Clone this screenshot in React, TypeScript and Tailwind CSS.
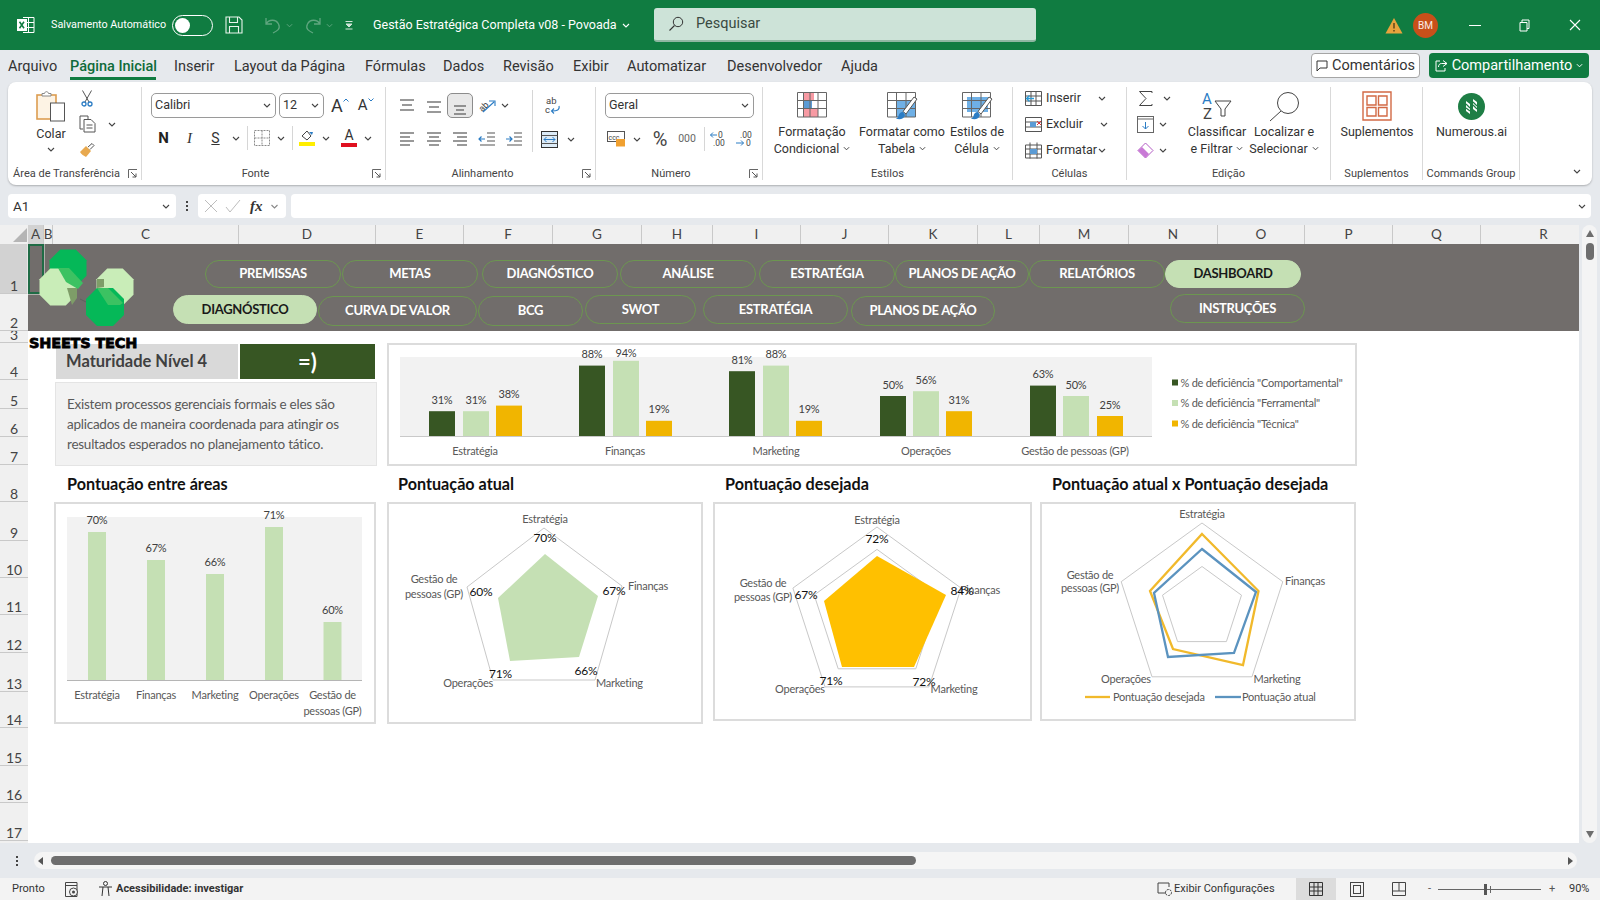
import React from "react";

const UI = "font-['Roboto',sans-serif]";
const CAL = "font-['Lato',sans-serif]";

function Chev({ c = "#444", w = 8 }: { c?: string; w?: number }) {
  return (
    <svg width={w} height={5} viewBox="0 0 8 5" className="shrink-0">
      <path d="M1 1l3 3 3-3" fill="none" stroke={c} strokeWidth="1.1" />
    </svg>
  );
}
function Launcher() {
  return (
    <svg width={10} height={10} viewBox="0 0 10 10">
      <path d="M0.5 9V0.5H9" fill="none" stroke="#666" />
      <path d="M3 3l5 5M8 4.5V8H4.5" fill="none" stroke="#555" />
    </svg>
  );
}
function Lines({ l, c = "#555" }: { l: number[][]; c?: string }) {
  return (
    <svg width={18} height={18} viewBox="0 0 18 18">
      {l.map((a, i) => (
        <path key={i} d={`M${a[0]} ${a[2]}H${a[1]}`} stroke={c} strokeWidth="1.2" />
      ))}
    </svg>
  );
}
function Indent({ right }: { right?: boolean }) {
  return (
    <svg width={18} height={18} viewBox="0 0 18 18">
      <path d="M9 3H17M9 7H17M9 11H17M2 15H17" stroke="#555" strokeWidth="1.2" />
      <path d={right ? "M1 9H7M4.5 6.5L7 9l-2.5 2.5" : "M1 9H7M3.5 6.5L1 9l2.5 2.5"} fill="none" stroke="#2b7cc4" strokeWidth="1.2" />
    </svg>
  );
}
function Grid({ children }: { children?: React.ReactNode }) {
  return (
    <svg width={32} height={32} viewBox="0 0 32 32">
      {children}
    </svg>
  );
}
function Brush() {
  return (
    <g>
      <path d="M31 9L20 24l-3-2.5L28 7z" fill="#fff" stroke="#555" strokeWidth="1" />
      <path d="M17 22c-3 0-4 2-4.5 4-.3 1.5-1.5 2-2.5 2.5 3 1.5 8 1 9-3.5z" fill="#2b7cc4" />
    </g>
  );
}
function TableLines() {
  return <path d="M1.5 2.5H29.5V27H1.5ZM1.5 10.5H29.5M1.5 18.5H29.5M10.5 2.5V27M20 2.5V27" fill="none" stroke="#666" strokeWidth="1" />;
}

function Label({ children, launcher }: { children: React.ReactNode; launcher?: boolean }) {
  return (
    <div className={`h-[12px] mt-[1px] flex items-center justify-center relative text-[11px] leading-[12px] text-[#444] whitespace-nowrap ${launcher ? "pr-[16px]" : ""}`}>
      {children}
      {launcher && (
        <span className="absolute right-[3px] top-[1px]">
          <Launcher />
        </span>
      )}
    </div>
  );
}
function Cell({ w, children, cls = "" }: { w: string; children?: React.ReactNode; cls?: string }) {
  return <div className={`${w} h-full flex items-center justify-center shrink-0 ${cls}`}>{children}</div>;
}
function Sep({ h = "h-[24px]" }: { h?: string }) {
  return <div className={`w-px ${h} bg-[#d6d6d6]`} />;
}
function Select({ w, text, ml = "" }: { w: string; text: string; ml?: string }) {
  return (
    <div className={`${w} ${ml} h-[25px] shrink-0 rounded-[5px] border border-[#9a9a9a] bg-white flex items-center justify-between pl-[3px] pr-[4px] text-[12.5px] text-[#333]`}>
      <span>{text}</span>
      <Chev />
    </div>
  );
}
function BigBtn({ w, icon, l1, l2 }: { w: string; icon: React.ReactNode; l1: string; l2?: string }) {
  return (
    <div className={`${w} shrink-0 flex flex-col items-center text-[12.5px] leading-[17px] text-[#333] whitespace-nowrap`}>
      <div className="h-[32px] mt-[3px] flex items-center justify-center">{icon}</div>
      <div className="mt-[1px] h-[17px]">{l1}</div>
      {l2 && (
        <div className="h-[17px] flex items-center gap-[4px]">
          {l2} <Chev w={7} />
        </div>
      )}
    </div>
  );
}

const tabs = [
  { t: "Arquivo", c: "w-[49px] mr-[13px] pt-[4px]" },
  { t: "Página Inicial", c: "w-[86px] mr-[18px] pt-[7px] font-medium text-[#0f6b3a] border-b-[3px] border-[#107c41]" },
  { t: "Inserir", c: "w-[42px] mr-[18px] pt-[4px]" },
  { t: "Layout da Página", c: "w-[111px] mr-[20px] pt-[4px]" },
  { t: "Fórmulas", c: "w-[60px] mr-[18px] pt-[4px]" },
  { t: "Dados", c: "w-[42px] mr-[18px] pt-[4px]" },
  { t: "Revisão", c: "w-[50px] mr-[20px] pt-[4px]" },
  { t: "Exibir", c: "w-[36px] mr-[18px] pt-[4px]" },
  { t: "Automatizar", c: "w-[81px] mr-[19px] pt-[4px]" },
  { t: "Desenvolvedor", c: "w-[97px] mr-[17px] pt-[4px]" },
  { t: "Ajuda", c: "w-[38px] pt-[4px]" },
];

const columns = [
  { t: "A", c: "w-[16px] bg-[#d2d2d2] text-[#1f6b45]" },
  { t: "B", c: "w-[9px]" },
  { t: "C", c: "w-[186px]" },
  { t: "D", c: "w-[137px]" },
  { t: "E", c: "w-[88px]" },
  { t: "F", c: "w-[89px]" },
  { t: "G", c: "w-[89px]" },
  { t: "H", c: "w-[71px]" },
  { t: "I", c: "w-[88px]" },
  { t: "J", c: "w-[88px]" },
  { t: "K", c: "w-[89px]" },
  { t: "L", c: "w-[62px]" },
  { t: "M", c: "w-[89px]" },
  { t: "N", c: "w-[89px]" },
  { t: "O", c: "w-[87px]" },
  { t: "P", c: "w-[88px]" },
  { t: "Q", c: "w-[88px]" },
  { t: "R", c: "w-[126px]" },
];

const rows = [
  { t: "1", c: "h-[50px] bg-[#d2d2d2] text-[#1f6b45]" },
  { t: "2", c: "h-[37px]" },
  { t: "3", c: "h-[12px]" },
  { t: "4", c: "h-[37px]" },
  { t: "5", c: "h-[29px]" },
  { t: "6", c: "h-[28px]" },
  { t: "7", c: "h-[28px]" },
  { t: "8", c: "h-[37px]" },
  { t: "9", c: "h-[39px]" },
  { t: "10", c: "h-[37px]" },
  { t: "11", c: "h-[37px]" },
  { t: "12", c: "h-[38px]" },
  { t: "13", c: "h-[39px]" },
  { t: "14", c: "h-[36px]" },
  { t: "15", c: "h-[38px]" },
  { t: "16", c: "h-[37px]" },
  { t: "17", c: "h-[38px]" },
];

const pillsTop = [
  { t: "PREMISSAS", c: "ml-[177px] w-[136px] h-[28px]" },
  { t: "METAS", c: "ml-[1px] w-[136px] h-[28px]" },
  { t: "DIAGNÓSTICO", c: "ml-[4px] w-[136px] h-[28px]" },
  { t: "ANÁLISE", c: "ml-[2px] w-[136px] h-[28px]" },
  { t: "ESTRATÉGIA", c: "ml-[3px] w-[136px] h-[28px]" },
  { t: "PLANOS DE AÇÃO", c: "w-[134px] h-[28px]" },
  { t: "RELATÓRIOS", c: "w-[136px] h-[28px]" },
  { t: "DASHBOARD", c: "w-[136px] h-[28px]", on: true },
];
const pillsBottom = [
  { t: "DIAGNÓSTICO", c: "ml-[145px] w-[144px] h-[29px] mt-[1px]", on: true },
  { t: "CURVA DE VALOR", c: "ml-[1px] w-[159px] h-[30px] mt-[2px]" },
  { t: "BCG", c: "ml-[1px] w-[105px] h-[30px] mt-[2px]" },
  { t: "SWOT", c: "ml-[2px] w-[111px] h-[29px] mt-[1px]" },
  { t: "ESTRATÉGIA", c: "ml-[7px] w-[145px] h-[29px] mt-[1px]" },
  { t: "PLANOS DE AÇÃO", c: "ml-[3px] w-[144px] h-[30px] mt-[2px]" },
  { t: "INSTRUÇÕES", c: "ml-[175px] w-[135px] h-[29px]" },
];

function Pill({ t, c, on }: { t: string; c: string; on?: boolean }) {
  return (
    <div
      className={`${c} shrink-0 rounded-full border-[1.5px] flex items-center justify-center text-[13px] font-bold tracking-[-0.3px] ${
        on ? "bg-[#c5e0b4] border-[#c5e0b4] text-[#1a1a1a]" : "border-[#6c9650] text-white"
      }`}
    >
      {t}
    </div>
  );
}

function T({ x, y, s = 11, c = "#595959", a = "middle", children }: { x: number; y: number; s?: number; c?: string; a?: "middle" | "start" | "end"; children: React.ReactNode }) {
  return (
    <text x={x} y={y - 1} fontSize={s} fill={c} textAnchor={a} dominantBaseline="central" letterSpacing="-0.25">
      {children}
    </text>
  );
}

function pent(cx: number, cy: number, r: number) {
  return [0, 1, 2, 3, 4]
    .map((i) => {
      const a = ((-90 + 72 * i) * Math.PI) / 180;
      return `${(cx + r * Math.cos(a)).toFixed(1)},${(cy + r * Math.sin(a)).toFixed(1)}`;
    })
    .join(" ");
}

const defGroups = [
  { n: "Estratégia", cx: 475, x: [429, 463, 496], v: [31, 31, 38] },
  { n: "Finanças", cx: 625, x: [579, 613, 646], v: [88, 94, 19] },
  { n: "Marketing", cx: 776, x: [729, 763, 796], v: [81, 88, 19] },
  { n: "Operações", cx: 926, x: [880, 913, 946], v: [50, 56, 31] },
  { n: "Gestão de pessoas (GP)", cx: 1075, x: [1030, 1063, 1097], v: [63, 50, 25] },
];
const defColors = ["#375623", "#c5e0b4", "#f1b500"];

function DefChart() {
  return (
    <svg className="w-full h-full" viewBox="389 345 966 119">
      <rect x="400" y="357" width="752" height="79" fill="#f2f2f2" />
      <path d="M400 436.5H1152" stroke="#c9c9c9" />
      {defGroups.map((g) => (
        <g key={g.n}>
          {g.v.map((v, i) => (
            <g key={i}>
              <rect x={g.x[i]} y={436 - v * 0.8} width={26} height={v * 0.8} fill={defColors[i]} />
              <T x={g.x[i] + 13} y={Math.max(353, 436 - v * 0.8 - 11)} c="#404040">
                {v}%
              </T>
            </g>
          ))}
          <T x={g.cx} y={451}>
            {g.n}
          </T>
        </g>
      ))}
      {['% de deficiência "Comportamental"', '% de deficiência "Ferramental"', '% de deficiência "Técnica"'].map((t, i) => (
        <g key={t}>
          <rect x={1172} y={379.5 + i * 20.5} width={6} height={6} fill={defColors[i]} />
          <T x={1180.5} y={383 + i * 20.5} a="start" s={11}>
            {t}
          </T>
        </g>
      ))}
    </svg>
  );
}

function AreaChart() {
  const d = [
    { n: "Estratégia", x: 97, top: 532, v: 70 },
    { n: "Finanças", x: 156, top: 560, v: 67 },
    { n: "Marketing", x: 215, top: 574, v: 66 },
    { n: "Operações", x: 274, top: 527, v: 71 },
    { n: "Gestão de", x: 332.5, top: 622, v: 60 },
  ];
  return (
    <svg className="w-full h-full" viewBox="56 504 318 218">
      <rect x="67" y="517" width="295" height="163" fill="#f2f2f2" />
      <path d="M67 680.5H362" stroke="#b5b5b5" />
      {d.map((b) => (
        <g key={b.n}>
          <rect x={b.x - 9} y={b.top} width={18} height={680 - b.top} fill="#c5e0b4" />
          <T x={b.x} y={b.top - 12} c="#404040">
            {b.v}%
          </T>
          <T x={b.x} y={695}>
            {b.n}
          </T>
        </g>
      ))}
      <T x={332.5} y={711}>
        pessoas (GP)
      </T>
    </svg>
  );
}

function RadarAtual() {
  return (
    <svg className="w-full h-full" viewBox="389 504 312 218">
      <polygon points="544,528 622,586 595,680 493,680 467,587" fill="none" stroke="#c8c8c8" />
      <polygon points="545,554 598,596 579,657 510,661 498,598" fill="#c5e0b4" />
      <T x={545} y={519}>Estratégia</T>
      <T x={545} y={538} s={12} c="#111">70%</T>
      <T x={628} y={586} a="start">Finanças</T>
      <T x={614} y={591} s={12} c="#111">67%</T>
      <T x={586} y={671} s={12} c="#111">66%</T>
      <T x={500.5} y={674} s={12} c="#111">71%</T>
      <T x={596} y={683} a="start">Marketing</T>
      <T x={493} y={683} a="end">Operações</T>
      <T x={434} y={579}>Gestão de</T>
      <T x={434} y={594}>pessoas (GP)</T>
      <T x={481} y={592} s={12} c="#111">60%</T>
    </svg>
  );
}

function RadarDesejada() {
  return (
    <svg className="w-full h-full" viewBox="715 504 315 215">
      <polygon points={pent(877, 615.4, 88.4)} fill="none" stroke="#c8c8c8" />
      <polygon points={pent(877, 615.4, 66)} fill="none" stroke="#c8c8c8" />
      <polygon points="877,556 946,595 914,667 842,667 824,601" fill="#ffc000" />
      <T x={877} y={520}>Estratégia</T>
      <T x={877} y={539} s={12} c="#111">72%</T>
      <T x={980} y={590}>Finanças</T>
      <T x={962} y={591} s={12} c="#111">84%</T>
      <T x={763} y={583}>Gestão de</T>
      <T x={763} y={597}>pessoas (GP)</T>
      <T x={806} y={595} s={12} c="#111">67%</T>
      <T x={831} y={681} s={12} c="#111">71%</T>
      <T x={924} y={682} s={12} c="#111">72%</T>
      <T x={954} y={689}>Marketing</T>
      <T x={800} y={689}>Operações</T>
    </svg>
  );
}

function RadarCompare() {
  return (
    <svg className="w-full h-full" viewBox="1042 504 312 215">
      <polygon points={pent(1202, 608, 85)} fill="none" stroke="#c8c8c8" />
      <polygon points={pent(1202, 608, 41.5)} fill="none" stroke="#c8c8c8" />
      <polygon points="1202,534 1258.5,591 1243,665 1173,649 1150,591" fill="none" stroke="#f1b92b" strokeWidth="2.3" />
      <polygon points="1202,549 1256,592 1234,653 1168,657 1154,593" fill="none" stroke="#5b93bf" strokeWidth="2.3" />
      <T x={1202} y={514}>Estratégia</T>
      <T x={1305} y={581}>Finanças</T>
      <T x={1277} y={679}>Marketing</T>
      <T x={1126} y={679}>Operações</T>
      <T x={1090} y={575}>Gestão de</T>
      <T x={1090} y={588}>pessoas (GP)</T>
      <path d="M1085 697H1110" stroke="#f1b92b" strokeWidth="2.3" />
      <T x={1113} y={697} a="start">Pontuação desejada</T>
      <path d="M1215 697H1241" stroke="#5b93bf" strokeWidth="2.3" />
      <T x={1242} y={697} a="start">Pontuação atual</T>
    </svg>
  );
}

const oct = (cx: number, cy: number, r: number) => {
  const k = r * 0.42;
  return `${cx - k},${cy - r} ${cx + k},${cy - r} ${cx + r},${cy - k} ${cx + r},${cy + k} ${cx + k},${cy + r} ${cx - k},${cy + r} ${cx - r},${cy + k} ${cx - r},${cy - k}`;
};

function Logo() {
  return (
    <svg width={100} height={80} viewBox="38 248 100 80">
      <path d="M80 299l18 9" stroke="#5f5f5f" />
      <polygon points={oct(115, 287, 18.5)} fill="#c9edb8" />
      <polygon points={oct(68, 268, 18.5)} fill="#05b858" />
      <polygon points={oct(58, 287, 18.5)} fill="#c9edb8" />
      <polygon points="58,268 69,268 83,283 78,289 66,282" fill="#3cc262" />
      <polygon points="67,288 77,288 77,298 72,305" fill="#7e9d68" />
      <polygon points={oct(105, 307, 19)} fill="#05b858" />
      <polygon points="97,288 108,288 123,303 120,305 108,305" fill="#3cc262" />
      <polygon points="97,279 104,279 104,287 97,288" fill="#7e9d68" />
    </svg>
  );
}

export default function App() {
  return (
    <div className={`w-[1600px] h-[900px] overflow-hidden bg-[#e6e9ed] flex flex-col ${UI}`}>
      {/* title bar */}
      <div className="h-[50px] bg-[#107c41] flex items-center text-white shrink-0">
        <div className="ml-[16px] w-[19px]">
          <svg width={19} height={20} viewBox="0 0 19 20">
            <path d="M7 2.5H18V17.5H7M7 7.5H18M7 12.5H18M12.5 2.5V17.5" fill="none" stroke="#fff" strokeWidth="1" />
            <rect x="1" y="4" width="10" height="12" fill="#fff" />
            <path d="M3.5 6.8l4.5 6.5M8 6.8l-4.5 6.5" stroke="#107c41" strokeWidth="1.5" />
          </svg>
        </div>
        <span className="ml-[16px] w-[114px] text-[10.8px] whitespace-nowrap">Salvamento Automático</span>
        <div className="ml-[7px] w-[41px] h-[21px] rounded-full border-[1.5px] border-white flex items-center px-[2px]">
          <div className="w-[15px] h-[15px] rounded-full bg-white" />
        </div>
        <svg className="ml-[12px]" width={18} height={18} viewBox="0 0 18 18">
          <path d="M1 1H14L17 4V17H1ZM4.5 1V6.5H12.5V1M4.5 17V10.5H13.5V17" fill="none" stroke="#e8f4ec" strokeWidth="1.1" />
        </svg>
        <svg className="ml-[21px]" width={18} height={18} viewBox="0 0 18 18">
          <path d="M2 2V8H8M2 8C5 3 12 3 14.5 8S13 15 9 17" fill="none" stroke="#5fa67f" strokeWidth="1.3" />
        </svg>
        <span className="ml-[4px]"><Chev c="#5fa67f" w={7} /></span>
        <svg className="ml-[11px]" width={18} height={18} viewBox="0 0 18 18">
          <path d="M16 2V8H10M16 8C13 3 6 3 3.5 8S5 15 9 17" fill="none" stroke="#5fa67f" strokeWidth="1.3" />
        </svg>
        <span className="ml-[4px]"><Chev c="#5fa67f" w={7} /></span>
        <svg className="ml-[11px]" width={10} height={10} viewBox="0 0 10 10">
          <path d="M1.5 1.5H8.5M2 4l3 3 3-3ZM1.5 9H8.5" fill="#cfe5d8" stroke="#cfe5d8" strokeWidth="1" />
        </svg>
        <span className="ml-[19px] w-[243px] text-[12.5px] whitespace-nowrap">Gestão Estratégica Completa v08 - Povoada</span>
        <span className="ml-[5px]"><Chev c="#fff" w={10} /></span>
        <div className="ml-[23px] w-[382px] h-[34px] rounded-[3px] bg-[#cde3d8] border-b-2 border-[#8fb7a2] flex items-center text-[#3a4a42] text-[14.5px]">
          <svg className="ml-[14px]" width={16} height={16} viewBox="0 0 16 16">
            <circle cx="10" cy="6" r="4.7" fill="none" stroke="#333" strokeWidth="1" />
            <path d="M6.5 9.5L1.5 14.5" stroke="#333" strokeWidth="1.1" />
          </svg>
          <span className="ml-[12px]">Pesquisar</span>
        </div>
        <svg className="ml-[349px]" width={18} height={17} viewBox="0 0 18 17">
          <path d="M9 1L17.5 16.5H.5Z" fill="#e8a33d" />
          <path d="M9 6V11.5M9 13V14.5" stroke="#3d3010" strokeWidth="1.2" />
        </svg>
        <div className="ml-[10px] w-[25px] h-[25px] rounded-full bg-[#c8501a] flex items-center justify-center text-[10px] text-white/90">BM</div>
        <div className="ml-[31px] w-[12px] h-px bg-white" />
        <svg className="ml-[38px]" width={11} height={13} viewBox="0 0 11 13">
          <path d="M1 3.5H8V12H1ZM3 3.5V1H10V9.5H8" fill="none" stroke="#fff" strokeWidth="1" />
        </svg>
        <svg className="ml-[39px]" width={12} height={12} viewBox="0 0 12 12">
          <path d="M1 1L11 11M11 1L1 11" stroke="#fff" strokeWidth="1.1" />
        </svg>
      </div>

      {/* tabs */}
      <div className="h-[32px] flex shrink-0 pl-[8px] text-[14.5px] text-[#333] relative whitespace-nowrap">
        {tabs.map((t) => (
          <div key={t.t} className={`${t.c} h-[30px] flex items-center shrink-0`}>
            {t.t}
          </div>
        ))}
        <div className="ml-[432px] mt-[3px] w-[109px] h-[25px] rounded-[4px] bg-white border border-[#a5a5a5] flex items-center justify-center gap-[4px] shrink-0">
          <svg width={12} height={12} viewBox="0 0 12 12">
            <path d="M1 1H11V8H4L1 11Z" fill="none" stroke="#333" />
          </svg>
          Comentários
        </div>
        <div className="ml-[9px] mt-[3px] w-[160px] h-[25px] rounded-[4px] bg-[#107c41] text-white flex items-center justify-center gap-[4px] shrink-0">
          <svg width={13} height={13} viewBox="0 0 13 13">
            <path d="M8 1.5L12 4.5L8 7.5M12 4.5H6.5C4.5 4.5 3.5 6 3.5 8M5 2H1V12H10V9" fill="none" stroke="#fff" />
          </svg>
          Compartilhamento
          <Chev c="#fff" w={7} />
        </div>
      </div>

      {/* ribbon */}
      <div className="h-[103px] shrink-0 mx-[8px] rounded-[8px] bg-white shadow-[0_1px_2px_rgba(0,0,0,0.25)] flex text-[#333]">
        {/* clipboard */}
        <div className="w-[134px] my-[5px] h-[93px] border-r border-[#d9d9d9] flex flex-col shrink-0">
          <div className="h-[81px] flex">
            <div className="ml-[16px] w-[54px] flex flex-col items-center">
              <svg className="mt-[3px]" width={30} height={32} viewBox="0 0 30 32">
                <rect x="1" y="5" width="19" height="24" fill="#fdf3e4" stroke="#dd9d50" strokeWidth="1.6" />
                <path d="M6 6V3.5H8.5C9 1 12 1 12.5 3.5H15V6Z" fill="#fff" stroke="#888" />
                <rect x="14.5" y="13" width="14" height="18" fill="#fff" stroke="#555" />
              </svg>
              <span className="text-[12.5px] leading-[17px] mt-[3px]">Colar</span>
              <span className="mt-[5px]"><Chev /></span>
            </div>
            <div className="w-[18px] flex flex-col items-center">
              <svg className="mt-[3px]" width={14} height={17} viewBox="0 0 14 17">
                <path d="M2.5 0.5L9 12M11.5 0.5L5 12" stroke="#555" strokeWidth="1" fill="none" />
                <circle cx="4" cy="14" r="2" fill="none" stroke="#2b7cc4" strokeWidth="1.3" />
                <circle cx="10" cy="14" r="2" fill="none" stroke="#2b7cc4" strokeWidth="1.3" />
              </svg>
              <svg className="mt-[8px]" width={17} height={18} viewBox="0 0 17 18">
                <path d="M4 14H1V1H9V4M5 4.5H12L16 8.5V17H5ZM7.5 10H13.5M7.5 13H13.5" fill="none" stroke="#555" />
              </svg>
              <svg className="mt-[9px]" width={17} height={16} viewBox="0 0 17 16">
                <path d="M1 10L7 4L12 9L7 15C5 14 2 12 1 10Z" fill="#e8a94f" />
                <path d="M9 5L13 1.5L15 3.5L11 7.5" fill="none" stroke="#555" />
              </svg>
            </div>
            <div className="ml-[12px] mt-[35px]"><Chev /></div>
          </div>
          <Label launcher>Área de Transferência</Label>
        </div>
        {/* font */}
        <div className="w-[244px] my-[5px] h-[93px] border-r border-[#d9d9d9] flex flex-col shrink-0">
          <div className="h-[81px] flex flex-col pl-[9px]">
            <div className="flex items-center mt-[6px]">
              <Select w="w-[125px]" text="Calibri" />
              <Select w="w-[45px]" text="12" ml="ml-[3px]" />
              <div className="ml-[7px] flex items-start h-[25px]">
                <span className="text-[18px] leading-[25px] text-[#333]">A</span>
                <svg className="mt-[5px]" width={6} height={4} viewBox="0 0 6 4"><path d="M.5 3.5L3 1L5.500 3.500" fill="none" stroke="#2b7cc4" /></svg>
              </div>
              <div className="ml-[9px] flex items-start h-[25px]">
                <span className="text-[15px] leading-[25px] text-[#333]">A</span>
                <svg className="mt-[5px]" width={6} height={4} viewBox="0 0 6 4"><path d="M.5 .5L3 3L5.500 .5" fill="none" stroke="#2b7cc4" /></svg>
              </div>
            </div>
            <div className="flex h-[26px] mt-[7px]">
              <Cell w="w-[25px]"><span className="text-[15px] font-bold text-[#222]">N</span></Cell>
              <Cell w="w-[27px]"><span className="font-['Liberation_Serif',serif] italic text-[15px]">I</span></Cell>
              <Cell w="w-[25px]"><span className="text-[14px] underline">S</span></Cell>
              <Cell w="w-[16px]"><Chev /></Cell>
              <Cell w="w-[6px]"><Sep /></Cell>
              <Cell w="w-[24px]">
                <svg width={16} height={16} viewBox="0 0 16 16">
                  <path d="M.5.5H15.5V15.5H.5ZM8 .5V15.5M.5 8H15.5" fill="none" stroke="#8a8a8a" strokeDasharray="2 1" />
                </svg>
              </Cell>
              <Cell w="w-[14px]"><Chev /></Cell>
              <Cell w="w-[8px]"><Sep /></Cell>
              <Cell w="w-[22px]">
                <div className="flex flex-col items-center">
                  <svg width={14} height={11} viewBox="0 0 14 11">
                    <path d="M2 6L7 1L11 6L7 10Z" fill="none" stroke="#444" />
                    <path d="M9 2L12 5L13 2Z" fill="#2b7cc4" />
                  </svg>
                  <div className="w-[16px] h-[4px] bg-[#ffee00] mt-[1px]" />
                </div>
              </Cell>
              <Cell w="w-[16px]"><Chev /></Cell>
              <Cell w="w-[30px]">
                <div className="flex flex-col items-center">
                  <span className="text-[14px] leading-[13px]">A</span>
                  <div className="w-[16px] h-[4px] bg-[#e01020] mt-[1px]" />
                </div>
              </Cell>
              <Cell w="w-[8px]"><Chev /></Cell>
            </div>
          </div>
          <Label launcher>Fonte</Label>
        </div>
        {/* alignment */}
        <div className="w-[210px] my-[5px] h-[93px] border-r border-[#d9d9d9] flex flex-col shrink-0">
          <div className="h-[81px] flex pl-[8px]">
            <div className="w-[138px] flex flex-col">
              <div className="flex h-[25px] mt-[6px]">
                <Cell w="w-[26px]"><Lines l={[[2, 16, 3], [4, 14, 8], [2, 16, 13]]} /></Cell>
                <Cell w="w-[27px]"><Lines l={[[2, 16, 5], [4, 14, 10], [2, 16, 15]]} /></Cell>
                <Cell w="w-[26px]" cls="rounded-[5px] border border-[#8c8c8c] bg-[#e8e8e8]"><Lines l={[[3, 15, 9], [5, 13, 13], [3, 15, 17]]} /></Cell>
                <Cell w="w-[27px]">
                  <svg width={20} height={20} viewBox="0 0 20 20">
                    <text x="1" y="14" fontSize="9" fill="#444" transform="rotate(-45 6 10)">ab</text>
                    <path d="M6 16L17 6M12 5H18V10" fill="none" stroke="#2b7cc4" strokeWidth="1.1" />
                  </svg>
                </Cell>
                <Cell w="w-[10px]"><Chev /></Cell>
              </div>
              <div className="flex h-[26px] mt-[8px]">
                <Cell w="w-[26px]"><Lines l={[[2, 16, 3], [2, 12, 7], [2, 16, 11], [2, 12, 15]]} /></Cell>
                <Cell w="w-[27px]"><Lines l={[[2, 16, 3], [4, 14, 7], [2, 16, 11], [4, 14, 15]]} /></Cell>
                <Cell w="w-[26px]"><Lines l={[[2, 16, 3], [6, 16, 7], [2, 16, 11], [6, 16, 15]]} /></Cell>
                <Cell w="w-[27px]"><Indent /></Cell>
                <Cell w="w-[27px]"><Indent right /></Cell>
              </div>
            </div>
            <div className="mt-[3px]"><Sep h="h-[62px]" /></div>
            <div className="ml-[8px] flex flex-col">
              <div className="w-[24px] h-[25px] mt-[6px] flex items-center justify-center">
                <svg width={18} height={20} viewBox="0 0 18 20">
                  <text x="2" y="8" fontSize="9.5" fill="#444">ab</text>
                  <text x="1" y="17" fontSize="9.5" fill="#444">c</text>
                  <path d="M15 10C16 14 13 15 8 15M10 12.5L7.5 15L10 17.5" fill="none" stroke="#2b7cc4" strokeWidth="1.1" />
                </svg>
              </div>
              <div className="flex h-[26px] mt-[8px] items-center">
                <svg width={17} height={17} viewBox="0 0 17 17">
                  <rect x=".5" y=".5" width="16" height="16" fill="#dcebf7" stroke="#333" />
                  <path d="M.5 4.5H16.5M.5 12.5H16.5" stroke="#555" />
                  <path d="M3 8.5H14M5.5 6L3 8.5L5.5 11M11.5 6L14 8.5L11.5 11" fill="none" stroke="#2b7cc4" />
                </svg>
                <span className="ml-[9px]"><Chev /></span>
              </div>
            </div>
          </div>
          <Label launcher>Alinhamento</Label>
        </div>
        {/* number */}
        <div className="w-[167px] my-[5px] h-[93px] border-r border-[#d9d9d9] flex flex-col shrink-0">
          <div className="h-[81px] flex flex-col pl-[9px]">
            <div className="mt-[6px]"><Select w="w-[149px]" text="Geral" /></div>
            <div className="flex h-[26px] mt-[8px]">
              <Cell w="w-[22px]">
                <svg width={19} height={16} viewBox="0 0 19 16">
                  <rect x=".5" y=".5" width="17" height="10" fill="#fff" stroke="#555" />
                  <text x="1.5" y="8.5" fontSize="7" fill="#444">ccc</text>
                  <path d="M9 8H18V15.5H9Z" fill="#f0a030" />
                </svg>
              </Cell>
              <Cell w="w-[20px]"><Chev /></Cell>
              <Cell w="w-[26px]"><span className="text-[20px] text-[#444] leading-none">%</span></Cell>
              <Cell w="w-[28px]"><span className="text-[10.5px] text-[#666]">000</span></Cell>
              <Cell w="w-[6px]"><Sep /></Cell>
              <Cell w="w-[22px]">
                <svg width={18} height={18} viewBox="0 0 18 18">
                  <text x="9" y="8" fontSize="8.5" fill="#444">0</text>
                  <text x="4" y="16" fontSize="8.5" fill="#444">.00</text>
                  <path d="M8 5H1.5M4 2.5L1.5 5L4 7.5" fill="none" stroke="#2b7cc4" />
                </svg>
              </Cell>
              <Cell w="w-[30px]">
                <svg width={18} height={18} viewBox="0 0 18 18">
                  <text x="5" y="8" fontSize="8.5" fill="#444">.00</text>
                  <text x="11" y="16" fontSize="8.5" fill="#444">0</text>
                  <path d="M1 13H8.5M6 10.5L8.5 13L6 15.5" fill="none" stroke="#2b7cc4" />
                </svg>
              </Cell>
            </div>
          </div>
          <Label launcher>Número</Label>
        </div>
        {/* styles */}
        <div className="w-[250px] my-[5px] h-[93px] border-r border-[#d9d9d9] flex flex-col shrink-0">
          <div className="h-[81px] flex pl-[4px]">
            <BigBtn
              w="w-[90px]"
              l1="Formatação"
              l2="Condicional"
              icon={
                <Grid>
                  <rect x="7" y="2.5" width="11" height="8" fill="#f79aa3" />
                  <rect x="7" y="10.5" width="9" height="8" fill="#5b9bd5" />
                  <rect x="7" y="18.5" width="15" height="8.5" fill="#f79aa3" />
                  <path d="M1.5 2.5H30.5V27H1.5ZM1.5 10.5H30.5M1.5 18.5H30.5M7.5 2.5V27M14 2.5V27M22 2.5V27" fill="none" stroke="#666" />
                </Grid>
              }
            />
            <BigBtn
              w="w-[90px]"
              l1="Formatar como"
              l2="Tabela"
              icon={
                <Grid>
                  <rect x="11" y="11" width="18" height="16" fill="#6fb0e6" />
                  <TableLines />
                  <Brush />
                </Grid>
              }
            />
            <BigBtn
              w="w-[60px]"
              l1="Estilos de"
              l2="Célula"
              icon={
                <Grid>
                  <rect x="6" y="7" width="21" height="15" fill="#6fb0e6" />
                  <TableLines />
                  <Brush />
                </Grid>
              }
            />
          </div>
          <Label>Estilos</Label>
        </div>
        {/* cells */}
        <div className="w-[114px] my-[5px] h-[93px] border-r border-[#d9d9d9] flex flex-col shrink-0">
          <div className="h-[81px] flex flex-col pl-[12px] text-[12.5px]">
            <div className="h-[26px] mt-[-2px] flex items-center gap-[4px]">
              <svg width={17} height={15} viewBox="0 0 17 15">
                <path d="M.5.5H16.5V14.5H.5ZM6 .5V14.5M11 .5V14.5M.5 5H16.5M.5 10H16.5" fill="none" stroke="#555" />
                <path d="M9 7.5H1.5M4.5 4.5L1.5 7.5L4.5 10.5" fill="none" stroke="#2b9ad6" strokeWidth="1.3" />
              </svg>
              <span className="w-[48px]">Inserir</span>
              <Chev />
            </div>
            <div className="h-[26px] flex items-center gap-[4px]">
              <svg width={17} height={15} viewBox="0 0 17 15">
                <path d="M.5.5H16.5V14.5H.5ZM.5 5H16.5M.5 10H16.5" fill="none" stroke="#555" />
                <rect x="5" y="5" width="6" height="5" fill="#5b9bd5" />
                <path d="M12 4l4 4M16 4l-4 4" stroke="#d9363e" />
              </svg>
              <span className="w-[50px]">Excluir</span>
              <Chev />
            </div>
            <div className="h-[26px] flex items-center gap-[4px]">
              <svg width={17} height={17} viewBox="0 0 17 17">
                <path d="M.5 3H16.5V16H.5ZM5 .5V16.5M12 .5V16.5M.5 7H16.5M.5 12H16.5" fill="none" stroke="#555" />
                <rect x="5" y="7" width="7" height="5" fill="#5b9bd5" />
              </svg>
              <span className="w-[48px]">Formatar</span>
              <Chev />
            </div>
          </div>
          <Label>Células</Label>
        </div>
        {/* editing */}
        <div className="w-[204px] my-[5px] h-[93px] border-r border-[#d9d9d9] flex flex-col shrink-0">
          <div className="h-[81px] flex pl-[10px]">
            <div className="w-[46px] flex flex-col">
              <div className="h-[26px] mt-[-2px] flex items-center">
                <svg width={17} height={17} viewBox="0 0 17 17">
                  <path d="M15 3V1.5H2.5L9 8.5L2.5 15.5H15V14" fill="none" stroke="#444" />
                </svg>
                <span className="ml-[9px]"><Chev /></span>
              </div>
              <div className="h-[26px] flex items-center">
                <svg width={17} height={17} viewBox="0 0 17 17">
                  <rect x=".5" y=".5" width="16" height="16" fill="#fff" stroke="#666" />
                  <path d="M.5 3H16.5" stroke="#666" />
                  <path d="M8.5 6V13M5.5 10L8.5 13L11.5 10" fill="none" stroke="#2b7cc4" />
                </svg>
                <span className="ml-[5px]"><Chev /></span>
              </div>
              <div className="h-[26px] flex items-center">
                <svg width={17} height={17} viewBox="0 0 17 17">
                  <path d="M8.5 1L16 8.5L8.5 16L1 8.5Z" fill="#fff" stroke="#b35cc4" />
                  <path d="M5 5L12 12L8.5 16L1 8.5Z" fill="#c97ad6" />
                </svg>
                <span className="ml-[5px]"><Chev /></span>
              </div>
            </div>
            <BigBtn
              w="w-[68px]"
              l1="Classificar"
              l2="e Filtrar"
              icon={
                <svg className="overflow-visible" width={30} height={30} viewBox="0 0 30 30">
                  <text x="0" y="13" fontSize="15" fill="#2b7cc4">A</text>
                  <text x="1" y="28" fontSize="15" fill="#444">Z</text>
                  <path d="M13 10H29L23 18V25H19V18Z" fill="none" stroke="#444" />
                </svg>
              }
            />
            <BigBtn
              w="w-[66px]"
              l1="Localizar e"
              l2="Selecionar"
              icon={
                <svg width={31} height={31} viewBox="0 0 31 31">
                  <circle cx="19" cy="12" r="10.5" fill="none" stroke="#444" />
                  <path d="M12 20L1 30" stroke="#444" />
                </svg>
              }
            />
          </div>
          <Label>Edição</Label>
        </div>
        {/* add-ins */}
        <div className="w-[92px] my-[5px] h-[93px] border-r border-[#d9d9d9] flex flex-col shrink-0">
          <div className="h-[81px]">
            <BigBtn
              w="w-[92px]"
              l1="Suplementos"
              icon={
                <svg width={30} height={30} viewBox="0 0 30 30">
                  <path d="M1 1H29V29H1ZM5 5H14V14H5ZM16.5 5H25V14H16.5ZM5 16.5H14V25H5ZM16.5 16.5H25V25H16.5Z" fill="#fff" stroke="#d26a45" strokeWidth="1.4" />
                </svg>
              }
            />
          </div>
          <Label>Suplementos</Label>
        </div>
        <div className="w-[97px] my-[5px] h-[93px] border-r border-[#d9d9d9] flex flex-col shrink-0">
          <div className="h-[81px]">
            <BigBtn
              w="w-[97px]"
              l1="Numerous.ai"
              icon={
                <svg width={27} height={27} viewBox="0 0 27 27">
                  <circle cx="13.5" cy="13.5" r="13.5" fill="#1e7e45" />
                  <path d="M8 8V18L12 21V11ZM15 6L19 9V19L15 16Z" fill="#fff" />
                  <path d="M8 11L12 15M15 9L19 13M8 15L12 18M15 12L19 16" stroke="#1e7e45" strokeWidth="1.2" />
                </svg>
              }
            />
          </div>
          <Label>Commands Group</Label>
        </div>
        <div className="ml-[52px] mt-[87px]"><Chev w={10} /></div>
      </div>

      {/* formula bar */}
      <div className="h-[24px] mt-[9px] shrink-0 flex pl-[8px]">
        <div className="w-[168px] rounded-[4px] bg-white flex items-center justify-between pl-[5px] pr-[5px] text-[13.5px] text-[#333]">
          A1
          <Chev w={10} />
        </div>
        <div className="w-[22px] flex flex-col items-center justify-center gap-[2px]">
          <div className="w-[2px] h-[2px] bg-[#444]" />
          <div className="w-[2px] h-[2px] bg-[#444]" />
          <div className="w-[2px] h-[2px] bg-[#444]" />
        </div>
        <div className="w-[88px] rounded-[4px] bg-white flex items-center pl-[6px] gap-[7px]">
          <svg width={14} height={14} viewBox="0 0 14 14"><path d="M1 1L13 13M13 1L1 13" stroke="#bdbdbd" /></svg>
          <svg width={16} height={14} viewBox="0 0 16 14"><path d="M1 8L5 13L15 1" fill="none" stroke="#bdbdbd" /></svg>
          <span className="font-['Liberation_Serif',serif] italic font-bold text-[15px] text-[#333] ml-[2px]">fx</span>
          <Chev c="#888" w={9} />
        </div>
        <div className="ml-[5px] w-[1300px] rounded-[4px] bg-white flex items-center justify-end pr-[4px]">
          <Chev w={10} />
        </div>
      </div>

      {/* sheet + vertical scrollbar */}
      <div className="h-[618px] mt-[7px] shrink-0 flex">
        <div className={`w-[1579px] shrink-0 flex flex-col ${CAL}`}>
          {/* column headers */}
          <div className="h-[19px] shrink-0 flex bg-[#f0f0f0] overflow-hidden">
            <div className="w-[28px] flex items-end justify-end pr-[1px] pb-[2px] shrink-0">
              <div className="w-0 h-0 border-l-[14px] border-l-transparent border-b-[14px] border-b-[#b5b5b5]" />
            </div>
            {columns.map((c) => (
              <div key={c.t} className={`${c.c} shrink-0 flex items-center justify-center border-r border-[#c9c9c9] text-[13.5px] leading-none text-[#444]`}>
                {c.t}
              </div>
            ))}
          </div>

          {/* sheet */}
          <div className="h-[599px] shrink-0 flex overflow-hidden bg-white">
            <div className="w-[28px] shrink-0 flex flex-col bg-[#f0f0f0]">
              {rows.map((r) => (
                <div key={r.t} className={`${r.c} shrink-0 overflow-hidden flex items-end justify-center border-b border-[#c9c9c9] text-[14px] leading-[15px] text-[#444]`}>
                  {r.t}
                </div>
              ))}
            </div>

            <div className="w-[1551px] shrink-0 relative flex flex-col">
              <div className="absolute left-0 top-0 w-[16px] h-[50px] border-2 border-[#1f6b45] shadow-[0_0_0_1px_rgba(255,255,255,0.45)] z-10" />
              <div className="absolute left-[10px] top-[4px] z-10">
                <Logo />
              </div>
              <div className="absolute left-[1px] top-[91px] z-10 font-['DejaVu_Sans',sans-serif] font-bold text-[14.5px] leading-[16px] tracking-[-0.2px] text-black [-webkit-text-stroke:0.8px_black] whitespace-nowrap">
                SHEETS TECH
              </div>

              {/* nav band */}
              <div className="h-[87px] shrink-0 bg-[#716d6b]">
                <div className="flex pt-[16px] h-[50px]">
                  {pillsTop.map((p) => (
                    <Pill key={p.t} {...p} />
                  ))}
                </div>
                <div className="flex">
                  {pillsBottom.map((p) => (
                    <Pill key={p.t} {...p} />
                  ))}
                </div>
              </div>

              {/* dashboard upper row */}
              <div className="flex mt-[12px] pl-[27px] shrink-0 h-[123px]">
                <div className="w-[322px] flex flex-col shrink-0">
                  <div className="flex h-[35px] mt-[1px]">
                    <div className="w-[182px] ml-[1px] bg-[#d9d9d9] flex items-center pl-[10px] text-[16.5px] font-bold text-[#404040]">Maturidade Nível 4</div>
                    <div className="w-[135px] ml-[2px] bg-[#375623] flex items-center justify-center text-[22px] font-bold text-white">=)</div>
                  </div>
                  <div className="h-[84px] mt-[3px] bg-[#f2f2f2] border border-[#e4e4e4] pl-[11px] pt-[11px] text-[13.5px] leading-[20px] tracking-[-0.25px] text-[#595959]">
                    Existem processos gerenciais formais e eles são
                    <br />
                    aplicados de maneira coordenada para atingir os
                    <br />
                    resultados esperados no planejamento tático.
                  </div>
                </div>
                <div className="w-[970px] ml-[10px] border-2 border-[#dcdcdc] shrink-0">
                  <DefChart />
                </div>
              </div>

              {/* dashboard lower row */}
              <div className="flex pl-[26px] shrink-0">
                <div className="w-[322px] shrink-0">
                  <div className="h-[36px] pt-[6px] pl-[13px] text-[16.2px] leading-[24px] font-bold text-[#111]">Pontuação entre áreas</div>
                  <div className="h-[222px] border-2 border-[#dcdcdc]"><AreaChart /></div>
                </div>
                <div className="w-[316px] ml-[11px] shrink-0">
                  <div className="h-[36px] pt-[6px] pl-[11px] text-[16.2px] leading-[24px] font-bold text-[#111]">Pontuação atual</div>
                  <div className="h-[222px] border-2 border-[#dcdcdc]"><RadarAtual /></div>
                </div>
                <div className="w-[319px] ml-[10px] shrink-0">
                  <div className="h-[36px] pt-[6px] pl-[12px] text-[16.2px] leading-[24px] font-bold text-[#111]">Pontuação desejada</div>
                  <div className="h-[219px] border-2 border-[#dcdcdc]"><RadarDesejada /></div>
                </div>
                <div className="w-[316px] ml-[8px] shrink-0">
                  <div className="h-[36px] pt-[6px] pl-[12px] text-[16.2px] leading-[24px] font-bold text-[#111] whitespace-nowrap">Pontuação atual x Pontuação desejada</div>
                  <div className="h-[219px] border-2 border-[#dcdcdc]"><RadarCompare /></div>
                </div>
              </div>
            </div>
          </div>
        </div>

        {/* vertical scrollbar */}
        <div className="w-[21px] shrink-0 flex justify-center">
          <div className="w-[15px] h-[618px] rounded-full bg-[#f4f4f4] flex flex-col items-center justify-between pt-[5px] pb-[5px]">
            <div className="flex flex-col items-center">
              <div className="w-0 h-0 border-x-[4px] border-x-transparent border-b-[7px] border-b-[#6e6e6e]" />
              <div className="w-[8px] h-[17px] mt-[6px] rounded-[4px] bg-[#6e6e6e]" />
            </div>
            <div className="w-0 h-0 border-x-[4px] border-x-transparent border-t-[7px] border-t-[#6e6e6e]" />
          </div>
        </div>
      </div>

      {/* horizontal scrollbar */}
      <div className="h-[35px] shrink-0 flex items-center">
        <div className="w-[34px] flex flex-col items-center gap-[2px]">
          <div className="w-[2px] h-[2px] bg-[#444]" />
          <div className="w-[2px] h-[2px] bg-[#444]" />
          <div className="w-[2px] h-[2px] bg-[#444]" />
        </div>
        <div className="w-[1543px] h-[17px] rounded-full bg-[#f5f5f5] flex items-center pl-[4px] pr-[4px]">
          <div className="w-0 h-0 border-y-[4px] border-y-transparent border-r-[5px] border-r-[#555]" />
          <div className="ml-[8px] w-[865px] h-[9px] rounded-full bg-[#6e6e6e]" />
          <div className="ml-auto w-0 h-0 border-y-[4px] border-y-transparent border-l-[5px] border-l-[#555]" />
        </div>
      </div>

      {/* status bar */}
      <div className="h-[22px] shrink-0 bg-[#f3f3f3] flex items-center text-[11px] text-[#333] whitespace-nowrap">
        <span className="ml-[12px] w-[33px]">Pronto</span>
        <svg className="ml-[20px]" width={15} height={15} viewBox="0 0 15 15">
          <path d="M.5.5H12V14.5H.5ZM.5 3.5H12" fill="none" stroke="#444" />
          <circle cx="8.5" cy="10" r="4" fill="#f3f3f3" stroke="#444" />
          <circle cx="8.5" cy="10" r="1.5" fill="#444" />
        </svg>
        <svg className="ml-[18px]" width={15} height={16} viewBox="0 0 15 16">
          <circle cx="7.5" cy="2.5" r="2" fill="none" stroke="#333" />
          <path d="M1 6H14M5 6L4 15M10 6L11 15" fill="none" stroke="#333" />
        </svg>
        <span className="ml-[3px] w-[131px] font-bold">Acessibilidade: investigar</span>
        <svg className="ml-[910px]" width={16} height={15} viewBox="0 0 16 15">
          <path d="M9 11H1V1H12V5" fill="none" stroke="#444" />
          <circle cx="11.5" cy="10.5" r="3" fill="none" stroke="#333" strokeDasharray="2 1" />
        </svg>
        <span className="ml-[1px] w-[101px]">Exibir Configurações</span>
        <div className="ml-[21px] w-[40px] h-[22px] bg-[#dcdcdc] flex items-center justify-center">
          <svg width={14} height={14} viewBox="0 0 14 14">
            <path d="M.5.5H13.5V13.5H.5ZM.5 5H13.5M.5 9H13.5M5 .5V13.5M9 .5V13.5" fill="none" stroke="#333" />
          </svg>
        </div>
        <svg className="ml-[14px]" width={14} height={15} viewBox="0 0 14 15">
          <rect x=".5" y=".5" width="13" height="14" fill="none" stroke="#444" />
          <rect x="3.5" y="3.5" width="7" height="8" fill="none" stroke="#444" />
        </svg>
        <svg className="ml-[28px]" width={14} height={14} viewBox="0 0 14 14">
          <path d="M.5.5H13.5V13.5H.5ZM.5 9H13.5M7 .5V9" fill="none" stroke="#444" />
        </svg>
        <span className="ml-[22px] text-[#555] w-[10px]">-</span>
        <div className="w-[103px] h-[1px] bg-[#666] flex items-center">
          <div className="ml-[46px] w-[3px] h-[11px] bg-[#555]" />
          <div className="ml-[3px] w-px h-[7px] bg-[#666]" />
        </div>
        <span className="ml-[8px] w-[20px] text-[#555]">+</span>
        <span className="text-[11px]">90%</span>
      </div>
    </div>
  );
}
